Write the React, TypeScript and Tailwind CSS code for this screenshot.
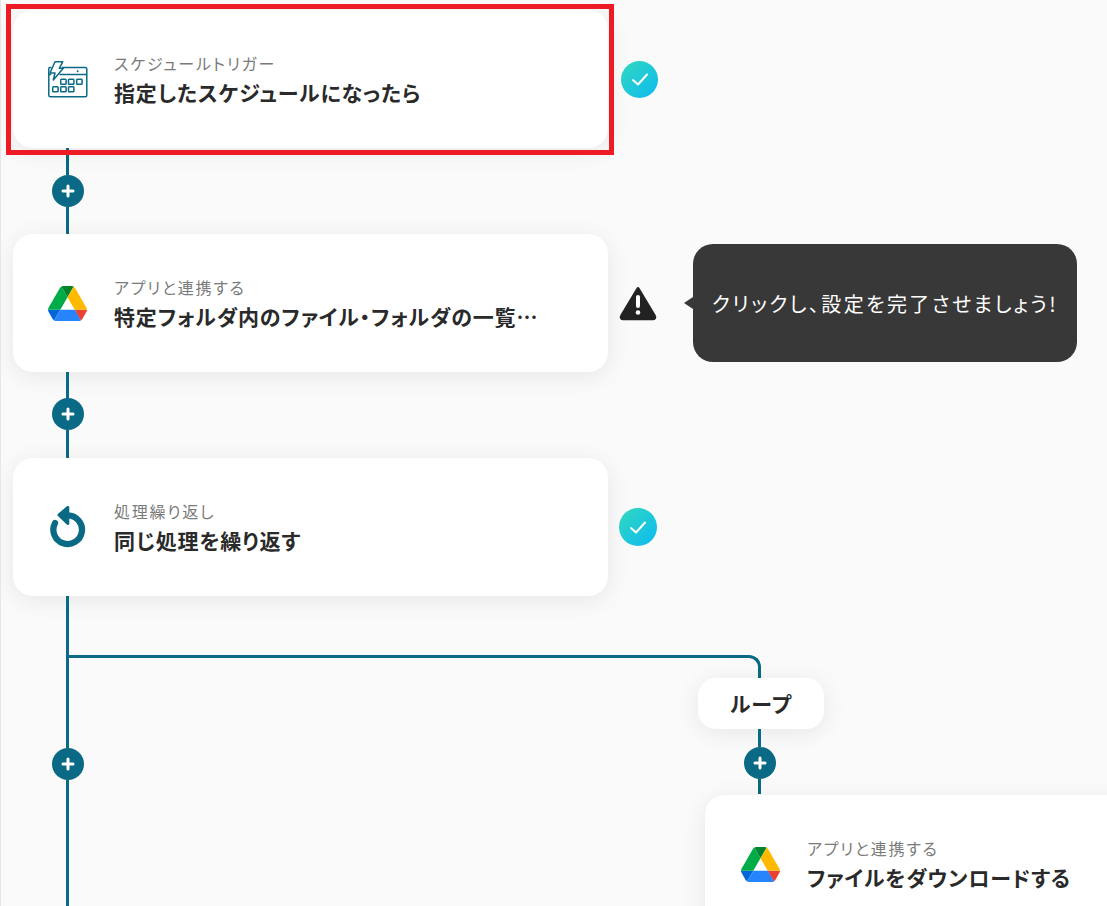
import React from 'react';

const TEAL_LINE = 'w-[3px] bg-[#0a6a85]';

const PlusButton = () => (
  <div className="flex h-8 w-8 shrink-0 items-center justify-center rounded-full bg-[#0a6a85]">
    <svg width="14" height="14" viewBox="0 0 14 14" fill="none" stroke="#fff" strokeWidth="3" strokeLinecap="round">
      <path d="M7 2v10M2 7h10" />
    </svg>
  </div>
);

const Connector = ({ top, bottom }: { top: number; bottom: number }) => (
  <div className="ml-[39px] flex w-8 flex-col">
    <div className={`${TEAL_LINE} ml-[14px]`} style={{ height: top }} />
    <PlusButton />
    <div className={`${TEAL_LINE} ml-[14px]`} style={{ height: bottom }} />
  </div>
);

const DriveIcon = () => (
  <svg width="39" height="35" viewBox="0 0 87.3 78">
    <path d="m6.6 66.85 3.85 6.65c.8 1.4 1.95 2.5 3.3 3.3l13.75-23.8h-27.5c0 1.55.4 3.1 1.2 4.5z" fill="#0066da" />
    <path d="m43.65 25-13.75-23.8c-1.35.8-2.5 1.9-3.3 3.3l-25.4 44a9.06 9.06 0 0 0 -1.2 4.5h27.5z" fill="#00ac47" />
    <path d="m73.55 76.8c1.35-.8 2.5-1.9 3.3-3.3l1.6-2.75 7.65-13.25c.8-1.4 1.2-2.95 1.2-4.5h-27.502l5.852 11.5z" fill="#ea4335" />
    <path d="m43.65 25 13.75-23.8c-1.35-.8-2.9-1.2-4.5-1.2h-18.5c-1.6 0-3.15.45-4.5 1.2z" fill="#00832d" />
    <path d="m59.8 53h-32.3l-13.75 23.8c1.35.8 2.9 1.2 4.5 1.2h50.8c1.6 0 3.15-.45 4.5-1.2z" fill="#2684fc" />
    <path d="m73.4 26.5-12.7-22c-.8-1.4-1.95-2.5-3.3-3.3l-13.75 23.8 16.15 28h27.45c0-1.55-.4-3.1-1.2-4.5z" fill="#ffba00" />
  </svg>
);

const ScheduleIcon = () => (
  <svg width="40" height="37" viewBox="0 0 40 37" fill="none" stroke="#0a6a85" strokeWidth="1.5" strokeLinejoin="round">
    <path d="M3.5 6.5H2.2C1.3 6.5.8 7.1.8 8v26.2c0 .9.6 1.5 1.5 1.5h35c.9 0 1.5-.6 1.5-1.5V8c0-.9-.6-1.5-1.5-1.5H14" />
    <path d="M11.5 13.5H38.8M.8 13.5h2.4" />
    <path d="M7 .8h7.7l-3.4 6.5h4L5.3 19 7 12H2z" />
    <circle cx="29.7" cy="10.2" r="1" fill="#0a6a85" stroke="none" />
    <rect x="12.7" y="18.3" width="5.4" height="5" rx=".8" />
    <rect x="20.5" y="18.3" width="5.4" height="5" rx=".8" />
    <rect x="28.7" y="18.3" width="5.4" height="5" rx=".8" />
    <rect x="4.7" y="25.8" width="5.4" height="5" rx=".8" />
    <rect x="12.7" y="25.8" width="5.4" height="5" rx=".8" />
    <rect x="20.5" y="25.8" width="5.4" height="5" rx=".8" />
  </svg>
);

const LoopIcon = () => (
  <svg width="36" height="42" viewBox="0 0 36 42" fill="none">
    <path d="M5 17.1A14.3 14.3 0 1 0 17.7 9.4" stroke="#0a6a85" strokeWidth="6.3" strokeLinecap="round" />
    <path d="M9 9 17.8 1.5v16z" fill="#0a6a85" stroke="#0a6a85" strokeWidth="3" strokeLinejoin="round" />
  </svg>
);

const CheckBadge = ({ size = 'h-[37px] w-[37px]' }: { size?: string }) => (
  <div className={`flex ${size} items-center justify-center rounded-full bg-gradient-to-br from-[#32d8bd] to-[#0eb9f0]`}>
    <svg width="18" height="15" viewBox="0 0 18 15" fill="none" stroke="#fff" strokeWidth="2" strokeLinecap="round" strokeLinejoin="round">
      <path d="M2 8l5 4.5L16 2.5" />
    </svg>
  </div>
);

const WarnBadge = () => (
  <svg width="38" height="35" viewBox="0 0 38 35">
    <path d="M19 2.5 35.5 30a1.8 1.8 0 0 1-1.6 2.8H4.1A1.8 1.8 0 0 1 2.5 30z" fill="#222" stroke="#222" strokeWidth="3" strokeLinejoin="round" />
    <rect x="17" y="9" width="4" height="13" rx="2" fill="#fff" />
    <circle cx="19" cy="26.5" r="2.3" fill="#fff" />
  </svg>
);

const Card = ({ icon, label, title, iconBox = 'pl-[35px]', iconWidth = 'w-[66px]' }: { icon: React.ReactNode; label: string; title: string; iconBox?: string; iconWidth?: string }) => (
  <div className={`flex h-[138px] w-[595px] shrink-0 items-center rounded-[20px] bg-white ${iconBox} shadow-[0_4px_24px_rgba(0,0,0,0.08)]`}>
    <div className={`flex ${iconWidth} shrink-0 items-center`}>{icon}</div>
    <div className="min-w-0">
      <p className="text-[16px] leading-[24px] tracking-[0.11em] text-[#7a7a7a]">{label}</p>
      <p className="mt-[2px] w-[426px] truncate text-[21px] font-bold leading-[30px] tracking-[0.04em] text-[#2a2a2a]">{title}</p>
    </div>
  </div>
);

export default function App() {
  return (
    <div className="relative h-[906px] w-[1107px] overflow-hidden border-l border-[#e6e6e6] bg-[#fafafa] font-['Noto_Sans_CJK_JP','Noto_Sans',sans-serif] [font-feature-settings:'palt']">
      <div className="-ml-px flex flex-col pl-[13px] pt-[10px]">
        <div className="relative flex items-center">
          <Card icon={<ScheduleIcon />} label="スケジュールトリガー" title="指定したスケジュールになったら" />
          <div className="ml-[13px]"><CheckBadge /></div>
          <div className="pointer-events-none absolute left-[-7px] top-[-6px] h-[151px] w-[608px] border-[5px] border-[#ed1c24]" />
        </div>
        <Connector top={27} bottom={27} />
        <div className="flex items-center">
          <Card icon={<DriveIcon />} label="アプリと連携する" title="特定フォルダ内のファイル・フォルダの一覧を取得する" />
          <div className="ml-[11px]"><WarnBadge /></div>
          <div className="relative ml-[36px] flex h-[118px] w-[384px] items-center justify-center rounded-[20px] bg-[#383838] pt-[2px] text-[20px] tracking-[0.12em] text-white">
            <div className="absolute left-[-9px] top-[53px] h-0 w-0 border-y-[6px] border-r-[9px] border-y-transparent border-r-[#383838]" />
            クリックし、設定を完了させましょう!
          </div>
        </div>
        <Connector top={26} bottom={28} />
        <div className="flex items-center">
          <Card icon={<LoopIcon />} label="処理繰り返し" title="同じ処理を繰り返す" iconBox="pl-[37px]" iconWidth="w-[64px]" />
          <div className="ml-[11px]"><CheckBadge size="h-[38px] w-[38px]" /></div>
        </div>
        <div className="relative flex">
          <Connector top={152} bottom={127} />
          {/* branch to the loop */}
          <div className="absolute left-[55px] top-[59px] h-[26px] w-[693px] rounded-tr-[12px] border-r-[3px] border-t-[3px] border-[#0a6a85]" />
          <div className="relative ml-[614px] flex w-[126px] flex-col pt-[82px]">
            <div className="flex h-[51px] w-[126px] items-center justify-center rounded-[18px] bg-white text-[21px] font-bold tracking-[0.05em] text-[#2a2a2a] shadow-[0_4px_24px_rgba(0,0,0,0.08)]">
              ループ
            </div>
            <div className={`${TEAL_LINE} ml-[60px] h-[18px]`} />
            <div className="ml-[46px]"><PlusButton /></div>
            <div className={`${TEAL_LINE} ml-[60px] h-[15px]`} />
            <div className="ml-[7px] mt-px">
              <Card icon={<DriveIcon />} label="アプリと連携する" title="ファイルをダウンロードする" iconBox="pl-[36px]" />
            </div>
          </div>
        </div>
      </div>
    </div>
  );
}
